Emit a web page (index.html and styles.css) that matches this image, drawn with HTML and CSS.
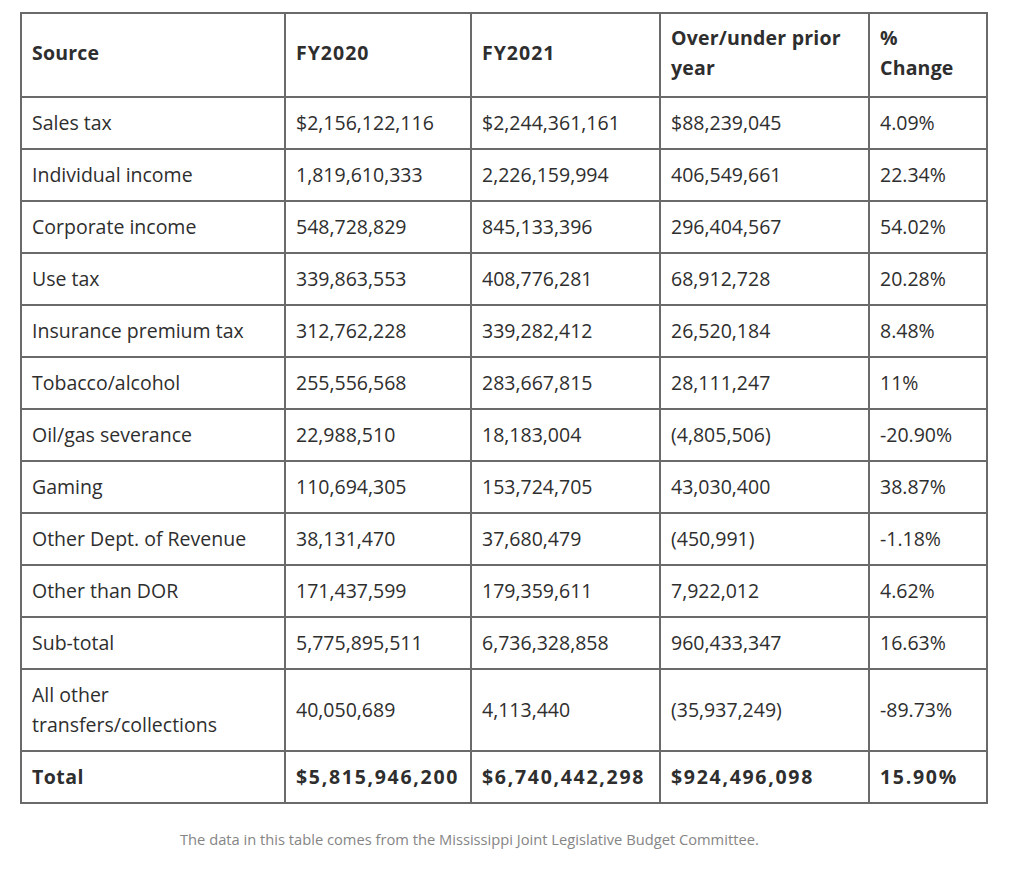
FILE: index.html
```html
<!DOCTYPE html>
<html lang="en">
<head>
<meta charset="utf-8">
<title>Mississippi revenue FY2020 vs FY2021</title>
<link rel="stylesheet" href="styles.css">
</head>
<body>
<div class="page">
  <table class="rev">
    <colgroup>
      <col class="c1"><col class="c2"><col class="c3"><col class="c4"><col class="c5">
    </colgroup>
    <thead>
      <tr class="head">
        <th>Source</th><th class="fy">FY2020</th><th class="fy">FY2021</th><th>Over/under prior year</th><th>%<br>Change</th>
      </tr>
    </thead>
    <tbody>
      <tr><td>Sales tax</td><td>$2,156,122,116</td><td>$2,244,361,161</td><td>$88,239,045</td><td>4.09%</td></tr>
      <tr><td>Individual income</td><td>1,819,610,333</td><td>2,226,159,994</td><td>406,549,661</td><td>22.34%</td></tr>
      <tr><td>Corporate income</td><td>548,728,829</td><td>845,133,396</td><td>296,404,567</td><td>54.02%</td></tr>
      <tr><td>Use tax</td><td>339,863,553</td><td>408,776,281</td><td>68,912,728</td><td>20.28%</td></tr>
      <tr><td>Insurance premium tax</td><td>312,762,228</td><td>339,282,412</td><td>26,520,184</td><td>8.48%</td></tr>
      <tr><td>Tobacco/alcohol</td><td>255,556,568</td><td>283,667,815</td><td>28,111,247</td><td>11%</td></tr>
      <tr><td>Oil/gas severance</td><td>22,988,510</td><td>18,183,004</td><td>(4,805,506)</td><td>-20.90%</td></tr>
      <tr><td>Gaming</td><td>110,694,305</td><td>153,724,705</td><td>43,030,400</td><td>38.87%</td></tr>
      <tr><td>Other Dept. of Revenue</td><td>38,131,470</td><td>37,680,479</td><td>(450,991)</td><td>-1.18%</td></tr>
      <tr><td>Other than DOR</td><td>171,437,599</td><td>179,359,611</td><td>7,922,012</td><td>4.62%</td></tr>
      <tr><td>Sub-total</td><td>5,775,895,511</td><td>6,736,328,858</td><td>960,433,347</td><td>16.63%</td></tr>
      <tr class="tall"><td>All other<br>transfers/collections</td><td>40,050,689</td><td>4,113,440</td><td>(35,937,249)</td><td>-89.73%</td></tr>
      <tr class="total"><td>Total</td><td class="num">$5,815,946,200</td><td class="num">$6,740,442,298</td><td class="num">$924,496,098</td><td class="num">15.90%</td></tr>
    </tbody>
  </table>
  <p class="caption">The data in this table comes from the Mississippi Joint Legislative Budget Committee.</p>
</div>
</body>
</html>
```
FILE: styles.css
```css
html, body {
  margin: 0;
  padding: 0;
  background: #ffffff;
}
.page {
  padding: 12px 0 0 20px;
  font-family: "Open Sans", "Noto Sans", sans-serif;
  color: #2e2e2e;
}
.rev {
  border-collapse: collapse;
  table-layout: fixed;
  width: 966px;
  font-size: 19.5px;
}
.c1 { width: 264px; }
.c2 { width: 186px; }
.c3 { width: 189px; }
.c4 { width: 209px; }
.c5 { width: 118px; }
.rev th,
.rev td {
  border: 2px solid #6a6a6a;
  padding: 0 10px;
  text-align: left;
  vertical-align: middle;
  line-height: 30px;
  white-space: nowrap;
}
.rev th {
  font-weight: 700;
  white-space: normal;
  padding-bottom: 4px;
  letter-spacing: 0.2px;
}
.rev th.fy { letter-spacing: 1px; }
.head { height: 84px; }
.rev tbody tr { height: 52px; }
.rev tbody tr.tall { height: 82px; }
.total td { font-weight: 700; letter-spacing: 0.5px; }
.total td.num { letter-spacing: 1.7px; }
.caption {
  margin: 25px 0 0 160px;
  font-size: 14.7px;
  color: #858585;
}
```
